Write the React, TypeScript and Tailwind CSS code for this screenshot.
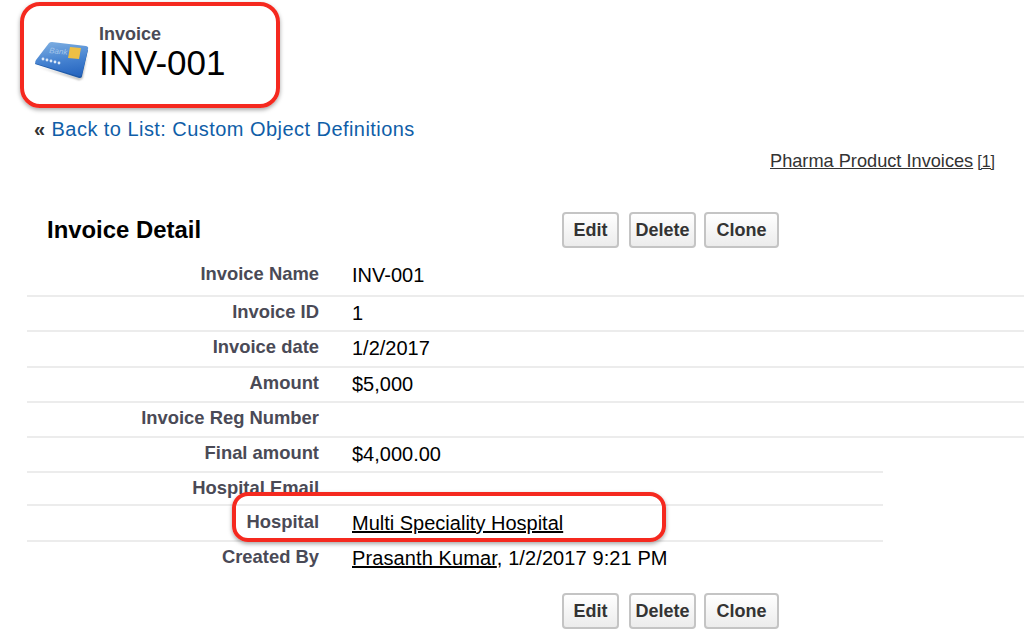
const rows = [
  { label: 'Invoice Name', value: 'INV-001', h: 'h-[35px]', pt: 'pt-0' },
  { label: 'Invoice ID', value: '1', h: 'h-[35px]', pt: 'pt-[3px]' },
  { label: 'Invoice date', value: '1/2/2017', h: 'h-[36px]', pt: 'pt-[3px]' },
  { label: 'Amount', value: '$5,000', h: 'h-[35px]', pt: 'pt-[3px]' },
  { label: 'Invoice Reg Number', value: '', h: 'h-[35px]', pt: 'pt-[3px]' },
]

function Buttons() {
  return (
    <div className="flex text-[18px] font-bold text-[#333]">
      <button className="h-[36px] w-[57px] rounded-[4px] border-2 border-[#c4c4c4] bg-gradient-to-b from-white to-[#ececec]">Edit</button>
      <button className="ml-[10px] h-[36px] w-[67px] rounded-[4px] border-2 border-[#c4c4c4] bg-gradient-to-b from-white to-[#ececec]">Delete</button>
      <button className="ml-[8px] h-[36px] w-[75px] rounded-[4px] border-2 border-[#c4c4c4] bg-gradient-to-b from-white to-[#ececec]">Clone</button>
    </div>
  )
}

function CardIcon() {
  return (
    <svg width="56" height="42" viewBox="0 0 56 42">
      <defs>
        <linearGradient id="card" x1="0.4" y1="0" x2="0.6" y2="1">
          <stop offset="0" stopColor="#79abe0" />
          <stop offset="0.55" stopColor="#4481d0" />
          <stop offset="1" stopColor="#2766c0" />
        </linearGradient>
        <filter id="soft"><feGaussianBlur stdDeviation="1" /></filter>
      </defs>
      <path d="M2 26 L46 40 L54 10 L48 39 Z" fill="#8d8d8d" filter="url(#soft)" />
      <path d="M1 24 L45 38 Q48 38 48 36 L54 10 L3 20 Z" fill="#1f5aa8" />
      <path d="M15 3 Q16 2 18 2 L52 6 Q55 7 54 9 L48 34 Q47 37 44 36 L3 24 Q0 23 2 20 Z" fill="url(#card)" />
      <path d="M36 7 L47 8 L45 19 L34 18 Z" fill="#edbf45" />
      <text x="15" y="13" fontSize="8" fontStyle="italic" fill="#a5c6ea" transform="rotate(6 15 13)">Bank</text>
      <circle cx="9" cy="19" r="1.4" fill="#dce9f8" />
      <circle cx="13" cy="20" r="1.4" fill="#dce9f8" />
      <circle cx="17" cy="21" r="1.4" fill="#dce9f8" />
      <circle cx="21" cy="22" r="1.4" fill="#dce9f8" />
      <circle cx="25" cy="23" r="1.4" fill="#dce9f8" />
    </svg>
  )
}

export default function App() {
  return (
    <div className="relative h-[644px] w-[1024px] overflow-hidden bg-white font-['Liberation_Sans',Arial,sans-serif] text-black">
      {/* header */}
      <div className="flex h-[110px] items-start pl-[34px] pt-[24px]">
        <div className="mt-[16px]"><CardIcon /></div>
        <div className="ml-[9px]">
          <div className="text-[18px] font-bold leading-[20px] text-[#4a4a56]">Invoice</div>
          <div className="text-[35px] leading-[38px]">INV-001</div>
        </div>
      </div>

      <div className="flex h-[38px] items-center pl-[34px] text-[20px] tracking-[0.45px]">
        <span className="mr-[6px] font-bold text-[#333]">«</span>
        <span className="text-[#0f5ea8]">Back to List: Custom Object Definitions</span>
      </div>

      <div className="mt-[3px] flex h-[22px] items-center justify-end pr-[29px] text-[#333]">
        <span className="text-[18.2px] underline">Pharma Product Invoices</span>
        <span className="ml-[4px] text-[16px] underline">[1]</span>
      </div>

      {/* detail */}
      <div className="mt-[39px] flex h-[36px] items-center pl-[47px]">
        <h2 className="w-[515px] text-[23.9px] font-bold">Invoice Detail</h2>
        <Buttons />
      </div>

      <div className="ml-[27px] mt-[14px]">
        {rows.map((r) => (
          <div key={r.label} className={`flex ${r.h} border-b-2 border-[#ececec] ${r.pt}`}>
            <div className="w-[292px] text-right text-[18.4px] font-bold leading-[24px] text-[#4a4a56]">{r.label}</div>
            <div className="ml-[33px] text-[20px] leading-[26px]">{r.value}</div>
          </div>
        ))}
        <div className="flex h-[35px] w-[856px] border-b-2 border-[#ececec] pt-[3px]">
          <div className="w-[292px] text-right text-[18.4px] font-bold leading-[24px] text-[#4a4a56]">Final amount</div>
          <div className="ml-[33px] text-[20px] leading-[26px]">$4,000.00</div>
        </div>
        <div className="h-[33px] w-[856px] border-b-2 border-[#ececec] pt-[3px]">
          <div className="w-[292px] text-right text-[18.4px] font-bold leading-[24px] text-[#4a4a56]">Hospital Email</div>
        </div>
        <div className="flex h-[36px] w-[856px] border-b-2 border-[#ececec] pt-[4px]">
          <div className="w-[292px] text-right text-[18.4px] font-bold leading-[24px] text-[#4a4a56]">Hospital</div>
          <div className="ml-[33px] text-[20px] leading-[26px] underline">Multi Speciality Hospital</div>
        </div>
        <div className="flex h-[36px] pt-[3px]">
          <div className="w-[292px] text-right text-[18.4px] font-bold leading-[24px] text-[#4a4a56]">Created By</div>
          <div className="ml-[33px] text-[20px] leading-[26px] tracking-[0.1px]"><span className="underline">Prasanth Kumar</span>, 1/2/2017 9:21 PM</div>
        </div>
      </div>

      <div className="ml-[562px] mt-[15px]">
        <Buttons />
      </div>

      {/* red annotations */}
      <div className="absolute left-[20px] top-[2px] h-[106px] w-[260px] rounded-[20px] border-[4px] border-[#f5291f] shadow-[0_2px_4px_rgba(0,0,0,0.35)]" />
      <div className="absolute left-[232px] top-[492px] h-[50px] w-[434px] rounded-[16px] border-[4px] border-[#f5291f] shadow-[0_2px_4px_rgba(0,0,0,0.35)]" />
    </div>
  )
}
